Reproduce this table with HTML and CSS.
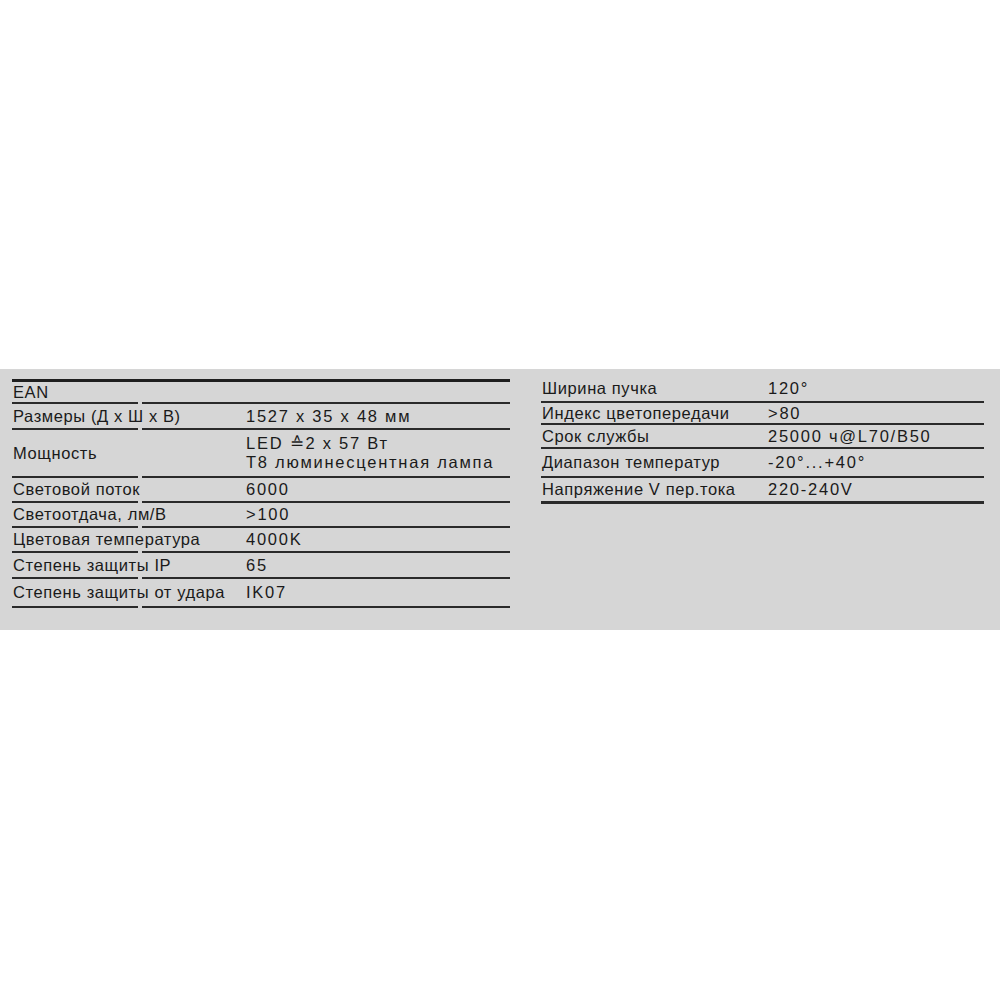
FILE: index.html
```html
<!DOCTYPE html>
<html lang="ru">
<head>
<meta charset="utf-8">
<title>Характеристики</title>
<link rel="stylesheet" href="styles.css">
</head>
<body>
<div class="band">
  <div class="spec spec-left">
    <div class="row r-ean"><div class="lab">EAN</div><div class="val"></div></div>
    <div class="row r-24"><div class="lab">Размеры (Д x Ш x В)</div><div class="val">1527 x 35 x 48 мм</div></div>
    <div class="row r-46"><div class="lab">Мощность</div><div class="val">LED ≙2 x 57 Вт<br>T8 люминесцентная лампа</div></div>
    <div class="row r-23"><div class="lab">Световой поток</div><div class="val">6000</div></div>
    <div class="row r-23"><div class="lab">Светоотдача, лм/В</div><div class="val">&gt;100</div></div>
    <div class="row r-23"><div class="lab">Цветовая температура</div><div class="val">4000K</div></div>
    <div class="row r-24"><div class="lab">Степень защиты IP</div><div class="val">65</div></div>
    <div class="row r-27"><div class="lab">Степень защиты от удара</div><div class="val">IK07</div></div>
  </div>
  <div class="spec spec-right">
    <div class="row q-1"><div class="lab">Ширина пучка</div><div class="val">120°</div></div>
    <div class="row q-2"><div class="lab">Индекс цветопередачи</div><div class="val">&gt;80</div></div>
    <div class="row q-3"><div class="lab">Срок службы</div><div class="val">25000 ч@L70/B50</div></div>
    <div class="row q-4"><div class="lab">Диапазон температур</div><div class="val">-20°...+40°</div></div>
    <div class="row q-5"><div class="lab">Напряжение V пер.тока</div><div class="val">220-240V</div></div>
  </div>
</div>
</body>
</html>
```
FILE: styles.css
```css
html, body {
  margin: 0;
  padding: 0;
  background: #ffffff;
}
body {
  font-family: "Liberation Sans", Arial, sans-serif;
  color: #1a1a1a;
}
.band {
  margin-top: 369px;
  height: 261px;
  background: #d6d6d6;
  display: flex;
  align-items: flex-start;
  box-sizing: border-box;
  padding-left: 12px;
}
.spec {
  display: flex;
  flex-direction: column;
}
.spec-left {
  width: 498px;
  margin-top: 10px;
  border-top: 3px solid #1e1e1e;
}
.spec-right {
  width: 443px;
  margin-top: 6px;
  margin-left: 31px;
}
.row {
  display: flex;
  align-items: center;
  font-size: 16.5px;
  line-height: 19px;
  box-sizing: content-box;
  position: relative;
  padding-bottom: 2px;
}
.row::after {
  content: "";
  position: absolute;
  left: 0;
  right: 0;
  bottom: 0;
  height: 2px;
  background: #2a2a2a;
}
.spec-left .row::after {
  background: linear-gradient(to right, #2a2a2a 0 126px, transparent 126px 130px, #2a2a2a 130px);
}
.lab {
  letter-spacing: 0.6px;
  padding-left: 1px;
  flex: none;
  white-space: nowrap;
}
.spec-left .lab {
  width: 233px;
}
.spec-right .lab {
  width: 226px;
}
.val {
  letter-spacing: 1.75px;
  white-space: nowrap;
}
.r-ean { height: 20px; }
.r-23 { height: 23px; }
.r-24 { height: 24px; }
.r-27 { height: 27px; }
.r-46 { height: 46px; }
.q-1 { height: 26px; }
.q-2 { height: 20px; }
.q-3 { height: 22px; }
.q-4 { height: 27px; }
.q-5 { height: 23px; padding-bottom: 3px; }
.q-5::after { height: 3px; }
```
